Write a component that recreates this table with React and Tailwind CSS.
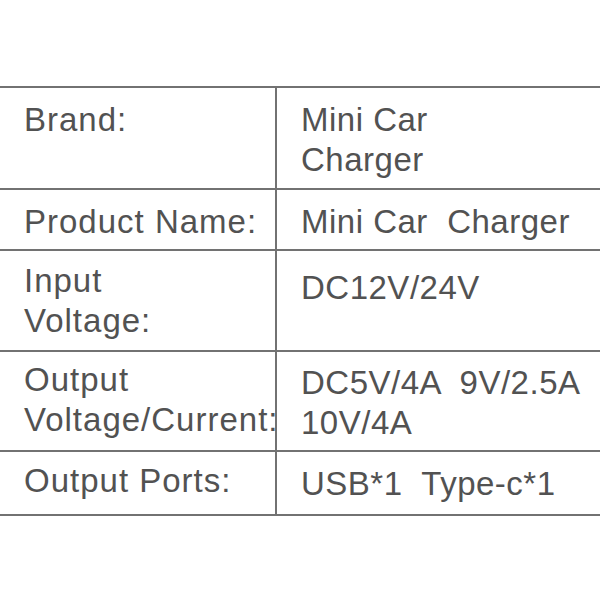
import React from 'react';

const rows = [
  { h: 'h-[102px]', left: ['Brand:'], right: ['Mini Car', 'Charger'], lp: 'pt-3', rp: 'pt-3' },
  { h: 'h-[61px]', left: ['Product Name:'], right: ['Mini Car  Charger'], lp: 'pt-3', rp: 'pt-3' },
  { h: 'h-[101px]', left: ['Input', 'Voltage:'], right: ['DC12V/24V'], lp: 'pt-[10px]', rp: 'pt-[17px]' },
  { h: 'h-[100px]', left: ['Output', 'Voltage/Current:'], right: ['DC5V/4A  9V/2.5A', '10V/4A'], lp: 'pt-[8px]', rp: 'pt-[11px]' },
  { h: 'h-[64px]', left: ['Output Ports:'], right: ['USB*1  Type-c*1'], lp: 'pt-[9px]', rp: 'pt-3' },
];

export default function App() {
  return (
    <div className="w-[600px] h-[600px] bg-white pt-[86px] text-[#525252] text-[33px] leading-[40px]" style={{ fontFamily: '"Liberation Sans", Arial, sans-serif' }}>
      <div className="border-t-2 border-[#727272]">
        {rows.map((r, i) => (
          <div key={i} className={`flex border-b-2 border-[#727272] ${r.h}`}>
            <div className={`w-[277px] shrink-0 border-r-2 border-[#727272] pl-6 ${r.lp} whitespace-pre tracking-[1px]`}>
              {r.left.map((t, j) => <div key={j}>{t}</div>)}
            </div>
            <div className={`flex-1 pl-6 ${r.rp} whitespace-pre tracking-[0.5px]`}>
              {r.right.map((t, j) => <div key={j}>{t}</div>)}
            </div>
          </div>
        ))}
      </div>
    </div>
  );
}
